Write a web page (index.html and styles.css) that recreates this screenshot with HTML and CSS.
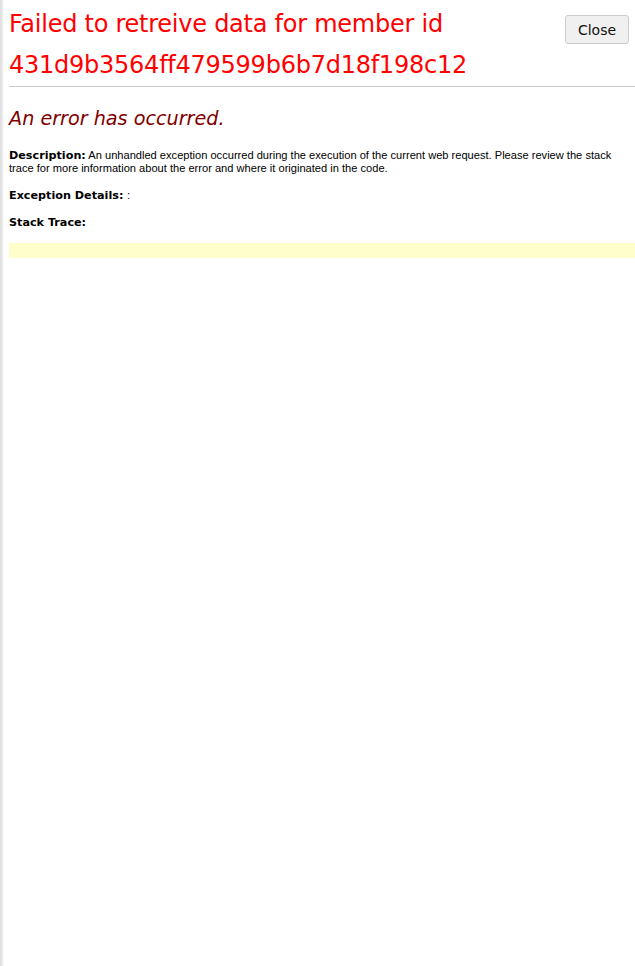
FILE: index.html
```html
<!DOCTYPE html>
<html lang="en">
<head>
    <meta charset="UTF-8">
    <meta name="viewport" content="width=device-width, initial-scale=1.0">
    <title>Error</title>
    <link rel="stylesheet" href="styles.css">
</head>
<body>
    <div class="dialog">
        <div class="header">
            <h1>Failed to retreive data for member id 431d9b3564ff479599b6b7d18f198c12</h1>
            <button type="button" class="close">Close</button>
        </div>
        <div class="content">
            <h2><i>An error has occurred.</i></h2>
            <p class="desc"><b>Description:</b> An unhandled exception occurred during the execution of the current web request. Please review the stack trace for more information about the error and where it originated in the code.</p>
            <p class="line"><b>Exception Details:</b> <span class="plain">:</span></p>
            <p class="line"><b>Stack Trace:</b></p>
            <div class="stack"></div>
        </div>
    </div>
</body>
</html>
```

FILE: styles.css
```css
body {
    margin: 0;
    padding: 0;
    font-family: "DejaVu Sans", Verdana, sans-serif;
    font-size: 11.2px;
    color: black;
    background: linear-gradient(to right, #dcdcdc 0, #e8e8e8 2px, #f4f4f4 3px, #fff 4px) no-repeat;
    background-color: #fff;
    min-height: 966px;
}
.dialog {
    padding-left: 9px;
}
.header {
    display: flex;
    align-items: flex-start;
    border-bottom: 1px solid #c8c8c8;
}
h1 {
    flex: 1;
    margin: 4px 0 0 0;
    font-weight: normal;
    font-size: 24px;
    line-height: 41px;
    letter-spacing: -0.25px;
    color: red;
}
.close {
    margin: 15px 6px 0 10px;
    width: 64px;
    height: 29px;
    background-color: #f0f0f0;
    border: 1px solid #ccc;
    border-radius: 3px;
    font-family: "DejaVu Sans", Verdana, sans-serif;
    font-size: 14px;
    color: #111;
    cursor: pointer;
}
h2 {
    margin: 21px 0 0 0;
    font-weight: normal;
    font-size: 19.2px;
    line-height: 22px;
    color: maroon;
}
p {
    margin: 0;
}
.desc {
    margin-top: 19px;
    font-family: "Liberation Sans", Arial, sans-serif;
    font-size: 11.1px;
    line-height: 13px;
}
.line {
    margin-top: 14px;
    line-height: 13px;
}
b {
    font-family: "DejaVu Sans", Verdana, sans-serif;
    font-size: 11.2px;
    line-height: 13px;
    font-weight: bold;
}
.plain {
    font-family: "Liberation Sans", Arial, sans-serif;
}
.stack {
    margin-top: 14px;
    height: 15px;
    background-color: #ffffcc;
}
```
